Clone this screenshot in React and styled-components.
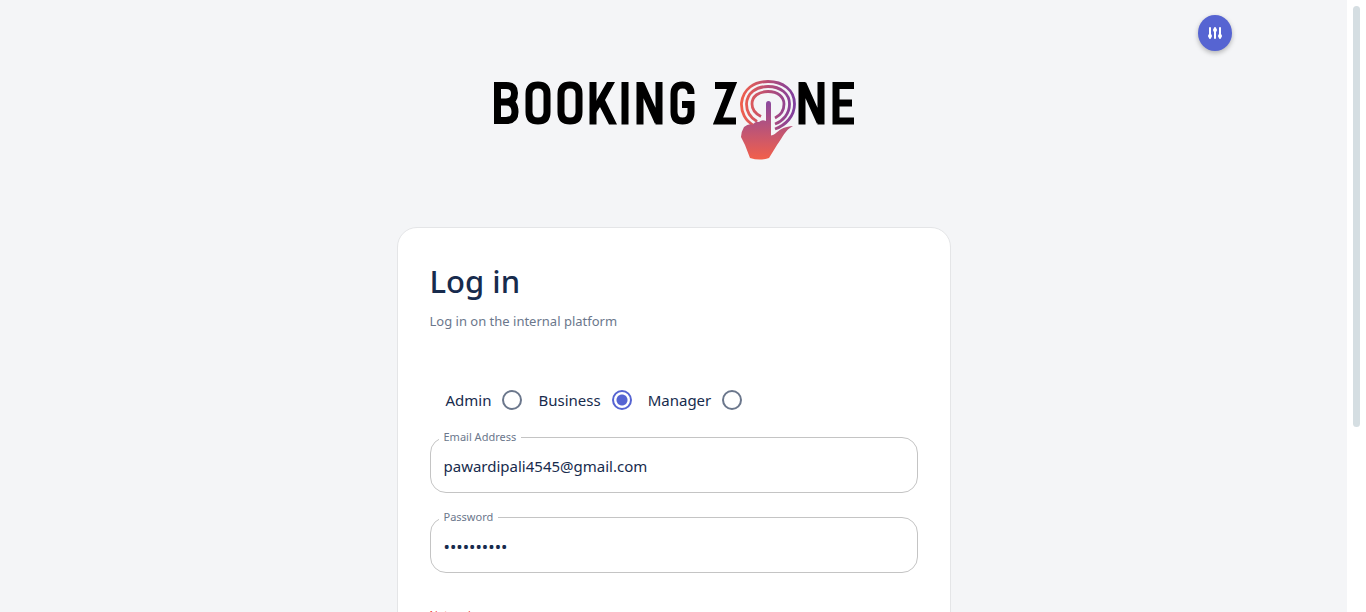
import React from "react";
import styled, { createGlobalStyle } from "styled-components";

const Global = createGlobalStyle`
  *, *::before, *::after { box-sizing: border-box; }
  html, body { margin: 0; height: 100%; background: #fff; }
  body { overflow: hidden; font-family: "Noto Sans", "Open Sans", sans-serif; color: #172b4d; }
  #root { height: 100%; }
`;

const Shell = styled.div`
  display: flex;
  height: 100vh;
`;

const Page = styled.main`
  flex: 1;
  display: flex;
  flex-direction: column;
  align-items: center;
  height: 100%;
  overflow: hidden;
  background: #f4f5f7;
  position: relative;
`;

const ScrollTrack = styled.div`
  width: 19px;
  padding: 6px 6px 0;
  background: #fff;
`;

const ScrollThumb = styled.div`
  height: 421px;
  border-radius: 4px;
  background: #d5dee2;
`;

const SettingsButton = styled.button`
  position: absolute;
  top: 15px;
  right: 115px;
  display: flex;
  align-items: center;
  justify-content: center;
  width: 34px;
  height: 36px;
  padding: 0;
  border: 0;
  border-radius: 50%;
  background: #5664d2;
  box-shadow: 0 2px 5px rgba(0, 0, 0, 0.28);
`;

const LogoRow = styled.header`
  flex: none;
  padding: 76px 0 63px;
  svg { display: block; }
`;

const Card = styled.form`
  flex: none;
  width: calc(100% - 32px);
  max-width: 554px;
  padding: 31px 32px 48px;
  border: 1px solid #e4e5e7;
  border-radius: 20px;
  background: #fff;
`;

const Title = styled.h1`
  margin: 0;
  font-size: 31px;
  line-height: 44px;
  font-weight: 500;
`;

const Subtitle = styled.p`
  margin: 8px 0 0;
  font-size: 13px;
  line-height: 20px;
  color: #6b778c;
`;

const Roles = styled.div`
  display: flex;
  gap: 16px;
  margin: 57px 0 17px;
  padding-left: 16px;
`;

const Role = styled.label`
  display: flex;
  align-items: center;
  gap: 11px;
  font-size: 15px;
  line-height: 24px;
`;

const Radio = styled.input`
  appearance: none;
  width: 20px;
  height: 20px;
  margin: 0;
  border: 2px solid #6b778c;
  border-radius: 50%;
  &:checked {
    border-color: #5664d2;
    background: radial-gradient(circle, #5664d2 5px, transparent 6px);
  }
`;

const Field = styled.fieldset`
  min-width: 0;
  height: 64px;
  margin: 0 0 16px;
  padding: 0 8px;
  border: 1px solid #c4c4c4;
  border-radius: 16px;
`;

const FieldLegend = styled.legend`
  padding: 0 5px;
  font-size: 11px;
  line-height: 16px;
  color: #6b778c;
`;

const Input = styled.input`
  display: block;
  width: 100%;
  height: 42px;
  padding: 0 5px;
  border: 0;
  outline: 0;
  background: transparent;
  font: inherit;
  font-size: 15px;
  color: inherit;
  &[type="password"] { font-size: 17px; }
`;

const ErrorText = styled.p`
  margin: 32px 0 0;
  font-size: 11px;
  line-height: 20px;
  color: #f44336;
`;

function Logo() {
  return (
    <svg width="366" height="88" viewBox="491 76 366 88" role="img" aria-label="Booking Zone">
      <defs>
        <linearGradient id="rings" x1="740" y1="0" x2="796" y2="0" gradientUnits="userSpaceOnUse">
          <stop offset="0" stopColor="#f3604a" />
          <stop offset="1" stopColor="#7c3da0" />
        </linearGradient>
        <linearGradient id="hand" x1="0" y1="102" x2="0" y2="160" gradientUnits="userSpaceOnUse">
          <stop offset="0" stopColor="#8c4a9e" />
          <stop offset="1" stopColor="#f3604a" />
        </linearGradient>
      </defs>
      <g fill="none" stroke="#000" strokeWidth="7">
        <path d="M497.500 82V124M494 85.500H506Q514.500 85.500 514.500 93Q514.500 102 506 102H498M506 102Q515 102 515 112Q515 120.500 506 120.500H494" />
        <path d="M529 94Q529 85 538 85T547 94V112Q547 121 538 121T529 112Z" />
        <path d="M561 94Q561 85 570 85T579 94V112Q579 121 570 121T561 112Z" />
        <path d="M593 82V124.500" />
        <path d="M625 82V124.500" />
        <path d="M640 124.500V82M659 82V124.500M641 84L658 122" />
        <path d="M691 94Q691 85 682.500 85Q674 85 674 94V112Q674 121 682.500 121Q691 121 691 112V104.500H682" />
        <path d="M715 85.500H732L718 121H736" />
        <path d="M802 124.500V82M821 82V124.500M803 84L820 122" />
        <path d="M854 85.500H836V121H854M836 103H852" />
      </g>
      <path d="M607 82H615L605 100L617 124.500H609L600 107L596 113V101Z" />
      <g fill="none" stroke="url(#rings)" strokeWidth="2.800">
        <path d="M754 125.500C745 121 741 112 741.500 103C743 89 754 81.500 768 81.500C783 81.500 794.500 90 794.500 104C794.500 116 786 125 775 129" />
        <path d="M757 121.500C750 117.500 746.500 111 746.500 104C747 93 756 86.500 768 86.500C781 86.500 789.500 94 789.500 104C789.500 114 783 121 775 124" />
        <path d="M761 116.500C755 113.500 752 109 752 104C752 96 759 91.500 768 91.500C778 91.500 784 97 784 104C784 111 780 115.500 775 118" />
      </g>
      <path fill="url(#hand)" d="M766 104Q766 101 768.500 101T771 104V135.500C777 135 778 127 793 126C785 130 783 137 777 145L769 158Q760 161 750 158L745 145L741 137Q741 132 744 127Q749 123 753 125Q755 121 759 122Q762 119 766 121Z" />
    </svg>
  );
}

function Sliders() {
  return (
    <svg width="16" height="16" viewBox="0 0 16 16" aria-hidden="true" fill="#fff" stroke="#fff" strokeWidth="2" strokeLinecap="round">
      <path d="M3 3V13M8 3V13M13 3V13" />
      <g stroke="none">
        <circle cx="3" cy="11" r="2" />
        <circle cx="8" cy="5" r="2" />
        <circle cx="13" cy="11" r="2" />
      </g>
    </svg>
  );
}

export default function App() {
  return (
    <Shell>
      <Global />
      <Page>
        <SettingsButton type="button" aria-label="Settings"><Sliders /></SettingsButton>
        <LogoRow><Logo /></LogoRow>
        <Card>
          <Title>Log in</Title>
          <Subtitle>Log in on the internal platform</Subtitle>
          <Roles role="radiogroup" aria-label="Account type">
            {["Admin", "Business", "Manager"].map((role) => (
              <Role key={role}>
                {role}
                <Radio type="radio" name="role" value={role} defaultChecked={role === "Business"} />
              </Role>
            ))}
          </Roles>
          <Field>
            <FieldLegend><label htmlFor="email">Email Address</label></FieldLegend>
            <Input id="email" type="email" defaultValue="pawardipali4545@gmail.com" />
          </Field>
          <Field>
            <FieldLegend><label htmlFor="password">Password</label></FieldLegend>
            <Input id="password" type="password" defaultValue="abcdefghij" />
          </Field>
          <ErrorText>Network</ErrorText>
        </Card>
      </Page>
      <ScrollTrack><ScrollThumb /></ScrollTrack>
    </Shell>
  );
}
